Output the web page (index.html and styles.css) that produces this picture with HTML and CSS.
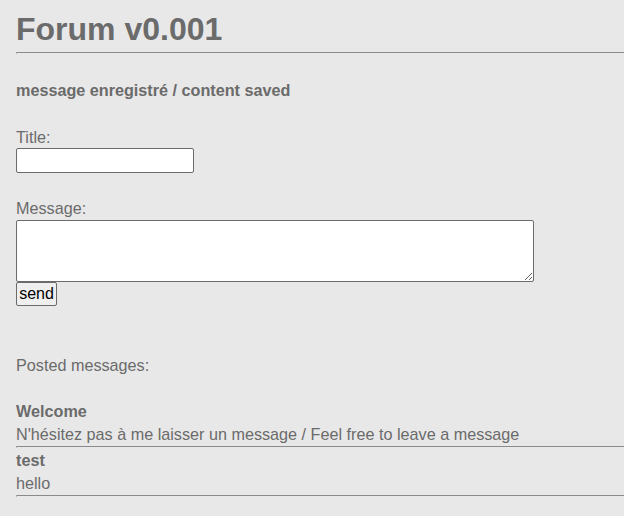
FILE: index.html
```html
<!DOCTYPE html>
<html>
<head>
<meta charset="utf-8">
<title>Forum v0.001</title>
<link rel="stylesheet" href="styles.css">
</head>
<body>
<h1 class="title">Forum v0.001</h1>
<hr class="rule">
<p class="notice">message enregistré / content saved</p>
<form class="form">
  <label class="label" for="t">Title:</label>
  <input class="input" id="t" type="text">
  <label class="label label-msg" for="m">Message:</label>
  <textarea class="area" id="m"></textarea>
  <button class="send" type="button">send</button>
</form>
<p class="posted">Posted messages:</p>
<div class="msgs">
  <div class="msg">
    <div class="msg-title">Welcome</div>
    <div class="msg-body">N'hésitez pas à me laisser un message / Feel free to leave a message</div>
    <hr class="rule">
  </div>
  <div class="msg">
    <div class="msg-title">test</div>
    <div class="msg-body">hello</div>
    <hr class="rule">
  </div>
</div>
</body>
</html>
```
FILE: styles.css
```css
html { background: #e8e8e8; }
body {
  margin: 0;
  padding: 0 0 0 16px;
  font-family: "Liberation Sans", Arial, sans-serif;
  color: #6b6b6b;
  font-size: 16.2px;
}
.title {
  font-size: 32px;
  font-weight: bold;
  margin: 0;
  padding-top: 11px;
  line-height: 37px;
}
.rule {
  margin: 4px 0 0 0;
  border: none;
  border-top: 1px solid #8a8a8a;
  border-left: 1px solid #b8b8b8;
  height: 1px;
}
.notice {
  font-weight: bold;
  font-size: 16.2px;
  margin: 27px 0 0 0;
  line-height: 19px;
}
.form { display: flex; flex-direction: column; align-items: flex-start; margin-top: 28px; }
.label { line-height: 18px; font-size: 16.2px; }
.input {
  margin: 2px 0 0 0;
  width: 178px;
  height: 25px;
  box-sizing: border-box;
  border: 1px solid #6b6b6b;
  border-radius: 2px;
  background: #fff;
}
.label-msg { margin-top: 26px; }
.area {
  margin: 3px 0 0 0;
  width: 518px;
  height: 62px;
  box-sizing: border-box;
  border: 1px solid #6b6b6b;
  border-radius: 2px;
  background: #fff;
}
.send {
  margin: 0;
  font-family: "Liberation Sans", Arial, sans-serif;
  font-size: 16px;
  color: #000;
  background: #efefef;
  border: 1px solid #6b6b6b;
  border-radius: 2px;
  padding: 1px 1px;
  height: 24px;
  width: 41px;
  line-height: 18px;
}
.posted { margin: 50px 0 0 0; line-height: 18px; }
.msgs { margin-top: 28px; }
.msg-title { font-weight: bold; line-height: 18px; }
.msg-body { line-height: 18px; margin-top: 5px; }
.msg .rule { margin-top: 3px; }
.msg + .msg { margin-top: 3px; }
```
